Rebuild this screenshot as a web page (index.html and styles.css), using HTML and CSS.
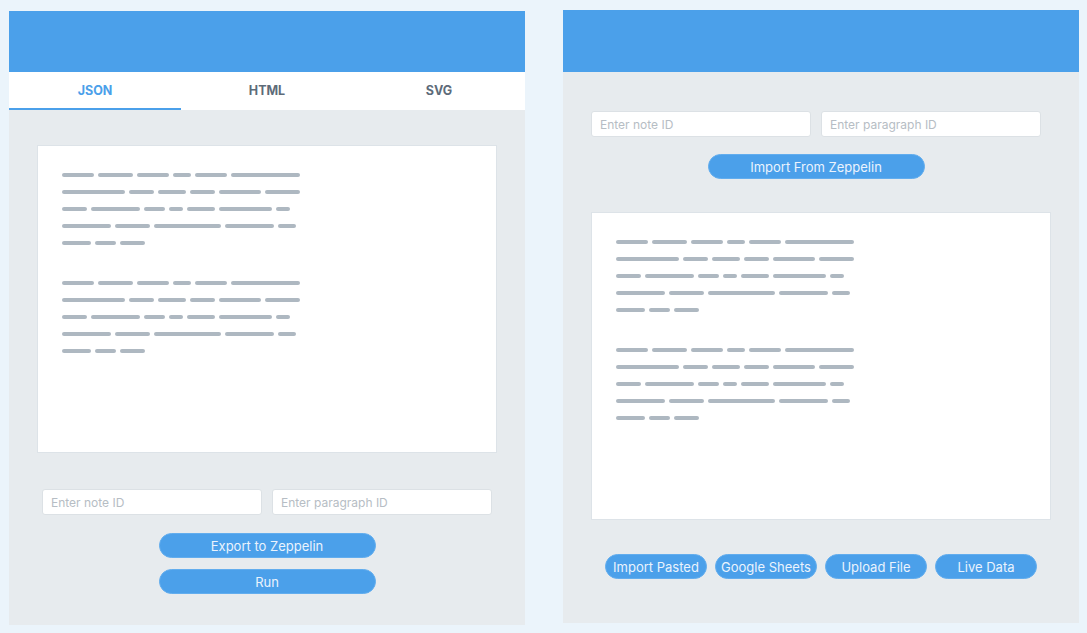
FILE: index.html
```html
<!DOCTYPE html>
<html lang="en">
<head>
<meta charset="utf-8">
<title>Zeppelin export / import</title>
<link rel="stylesheet" href="styles.css">
</head>
<body>
<div class="page">
  <section class="panel panel-left">
    <div class="header"></div>
    <nav class="tabs">
      <div class="tab active">JSON</div>
      <div class="tab">HTML</div>
      <div class="tab">SVG</div>
    </nav>
    <div class="body body-left">
      <div class="doc">
        <div class="para">
          <div class="line"><span style="width:32px"></span><span style="width:35px"></span><span style="width:32px"></span><span style="width:18px"></span><span style="width:32px"></span><span style="width:69px"></span></div>
          <div class="line"><span style="width:63px"></span><span style="width:25px"></span><span style="width:28px"></span><span style="width:25px"></span><span style="width:42px"></span><span style="width:35px"></span></div>
          <div class="line"><span style="width:25px"></span><span style="width:49px"></span><span style="width:21px"></span><span style="width:14px"></span><span style="width:28px"></span><span style="width:53px"></span><span style="width:14px"></span></div>
          <div class="line"><span style="width:49px"></span><span style="width:35px"></span><span style="width:67px"></span><span style="width:49px"></span><span style="width:18px"></span></div>
          <div class="line"><span style="width:29px"></span><span style="width:21px"></span><span style="width:25px"></span></div>
        </div>
        <div class="para">
          <div class="line"><span style="width:32px"></span><span style="width:35px"></span><span style="width:32px"></span><span style="width:18px"></span><span style="width:32px"></span><span style="width:69px"></span></div>
          <div class="line"><span style="width:63px"></span><span style="width:25px"></span><span style="width:28px"></span><span style="width:25px"></span><span style="width:42px"></span><span style="width:35px"></span></div>
          <div class="line"><span style="width:25px"></span><span style="width:49px"></span><span style="width:21px"></span><span style="width:14px"></span><span style="width:28px"></span><span style="width:53px"></span><span style="width:14px"></span></div>
          <div class="line"><span style="width:49px"></span><span style="width:35px"></span><span style="width:67px"></span><span style="width:49px"></span><span style="width:18px"></span></div>
          <div class="line"><span style="width:29px"></span><span style="width:21px"></span><span style="width:25px"></span></div>
        </div>
      </div>
      <div class="fields">
        <input class="field" type="text" placeholder="Enter note ID">
        <input class="field" type="text" placeholder="Enter paragraph ID">
      </div>
      <button class="btn btn-wide btn-export">Export to Zeppelin</button>
      <button class="btn btn-wide btn-run">Run</button>
    </div>
  </section>

  <section class="panel panel-right">
    <div class="header header-right"></div>
    <div class="body body-right">
      <div class="import-block">
        <div class="fields">
          <input class="field" type="text" placeholder="Enter note ID">
          <input class="field" type="text" placeholder="Enter paragraph ID">
        </div>
        <button class="btn btn-wide btn-import">Import From Zeppelin</button>
      </div>
      <div class="doc doc-right">
        <div class="para">
          <div class="line"><span style="width:32px"></span><span style="width:35px"></span><span style="width:32px"></span><span style="width:18px"></span><span style="width:32px"></span><span style="width:69px"></span></div>
          <div class="line"><span style="width:63px"></span><span style="width:25px"></span><span style="width:28px"></span><span style="width:25px"></span><span style="width:42px"></span><span style="width:35px"></span></div>
          <div class="line"><span style="width:25px"></span><span style="width:49px"></span><span style="width:21px"></span><span style="width:14px"></span><span style="width:28px"></span><span style="width:53px"></span><span style="width:14px"></span></div>
          <div class="line"><span style="width:49px"></span><span style="width:35px"></span><span style="width:67px"></span><span style="width:49px"></span><span style="width:18px"></span></div>
          <div class="line"><span style="width:29px"></span><span style="width:21px"></span><span style="width:25px"></span></div>
        </div>
        <div class="para">
          <div class="line"><span style="width:32px"></span><span style="width:35px"></span><span style="width:32px"></span><span style="width:18px"></span><span style="width:32px"></span><span style="width:69px"></span></div>
          <div class="line"><span style="width:63px"></span><span style="width:25px"></span><span style="width:28px"></span><span style="width:25px"></span><span style="width:42px"></span><span style="width:35px"></span></div>
          <div class="line"><span style="width:25px"></span><span style="width:49px"></span><span style="width:21px"></span><span style="width:14px"></span><span style="width:28px"></span><span style="width:53px"></span><span style="width:14px"></span></div>
          <div class="line"><span style="width:49px"></span><span style="width:35px"></span><span style="width:67px"></span><span style="width:49px"></span><span style="width:18px"></span></div>
          <div class="line"><span style="width:29px"></span><span style="width:21px"></span><span style="width:25px"></span></div>
        </div>
      </div>
      <div class="actions">
        <button class="btn btn-small">Import Pasted</button>
        <button class="btn btn-small">Google Sheets</button>
        <button class="btn btn-small">Upload File</button>
        <button class="btn btn-small">Live Data</button>
      </div>
    </div>
  </section>
</div>
</body>
</html>
```

FILE: styles.css
```css
* { box-sizing: border-box; }

body {
  margin: 0;
  background: #ebf4fb;
  font-family: Inter, "Noto Sans", "Liberation Sans", sans-serif;
}

.page {
  display: flex;
  align-items: flex-start;
  gap: 38px;
  padding: 10px 0 0 9px;
}

.panel {
  width: 516px;
  background: #e7ebee;
  display: flex;
  flex-direction: column;
}

.panel-left { margin-top: 1px; }

.header {
  height: 61px;
  background: #4ba0ea;
}

.header-right { height: 62px; }

.tabs {
  display: grid;
  grid-template-columns: repeat(3, 1fr);
  height: 38px;
  background: #ffffff;
}

.tab {
  display: flex;
  align-items: center;
  justify-content: center;
  font-size: 12.5px;
  font-weight: 700;
  color: #5d6b79;
  border-bottom: 2px solid transparent;
  padding-top: 1px;
}

.tab.active {
  color: #4ba0ea;
  border-bottom-color: #4ba0ea;
}

.body {
  display: flex;
  flex-direction: column;
  align-items: center;
}

.body-left { padding: 35px 28px 31px; }

.body-right {
  padding: 39px 28px 44px;
}

.doc {
  width: 460px;
  height: 308px;
  background: #ffffff;
  border: 1px solid #dde3e8;
  padding: 27px 24px;
}

.para {
  display: flex;
  flex-direction: column;
  gap: 13px;
}

.line {
  display: flex;
  gap: 4px;
  height: 4px;
}

.line span {
  height: 4px;
  border-radius: 2px;
  background: #aeb8c1;
}

.para + .para { margin-top: 36px; }

.fields {
  display: flex;
  gap: 10px;
}

.body-left .fields { margin-top: 36px; }

.field {
  width: 220px;
  height: 26px;
  border: 1px solid #dce1e5;
  border-radius: 3px;
  background: #ffffff;
  padding: 0 8px;
  font-family: inherit;
  font-size: 12px;
  color: #333;
  outline: none;
}

.field::placeholder { color: #b6bdc4; }

.btn {
  height: 25px;
  border-radius: 13px;
  background: #4ba0ea;
  border: 1px solid #62adee;
  color: #eaf3fd;
  font-family: inherit;
  font-size: 13px;
  padding: 0;
  cursor: pointer;
}

.btn-wide { width: 217px; }

.btn-export { margin-top: 18px; }
.btn-run { margin-top: 11px; }

.import-block {
  align-self: flex-start;
  width: 450px;
  display: flex;
  flex-direction: column;
  align-items: center;
}

.btn-import { margin-top: 17px; }

.doc-right { margin-top: 33px; }

.actions {
  display: flex;
  gap: 8px;
  margin-top: 34px;
}

.btn-small { width: 102px; }
```
